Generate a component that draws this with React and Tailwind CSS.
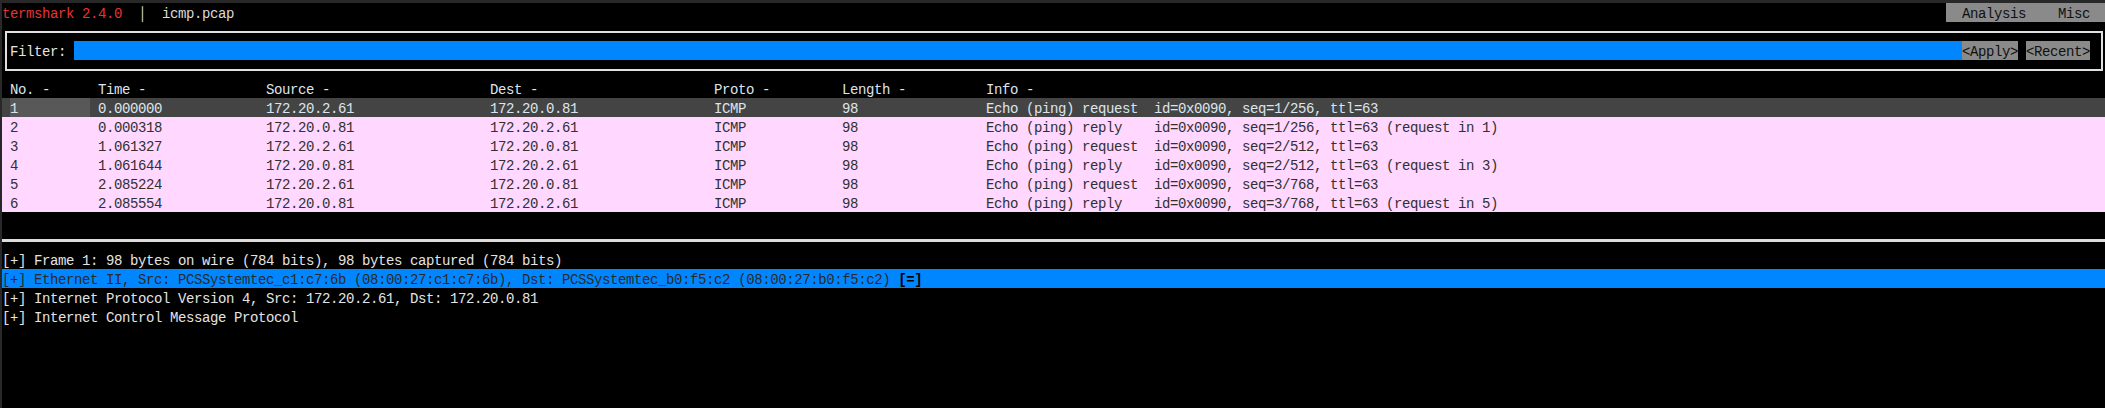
import React from 'react';

// termshark packet view: one terminal cell = 8px wide, 19px tall
const packets = [
  { no: '1', time: '0.000000', src: '172.20.2.61', dst: '172.20.0.81', info: 'Echo (ping) request  id=0x0090, seq=1/256, ttl=63' },
  { no: '2', time: '0.000318', src: '172.20.0.81', dst: '172.20.2.61', info: 'Echo (ping) reply    id=0x0090, seq=1/256, ttl=63 (request in 1)' },
  { no: '3', time: '1.061327', src: '172.20.2.61', dst: '172.20.0.81', info: 'Echo (ping) request  id=0x0090, seq=2/512, ttl=63' },
  { no: '4', time: '1.061644', src: '172.20.0.81', dst: '172.20.2.61', info: 'Echo (ping) reply    id=0x0090, seq=2/512, ttl=63 (request in 3)' },
  { no: '5', time: '2.085224', src: '172.20.2.61', dst: '172.20.0.81', info: 'Echo (ping) request  id=0x0090, seq=3/768, ttl=63' },
  { no: '6', time: '2.085554', src: '172.20.0.81', dst: '172.20.2.61', info: 'Echo (ping) reply    id=0x0090, seq=3/768, ttl=63 (request in 5)' },
];

function Cols({ no, time, src, dst, proto, len, info, cursor }) {
  return (
    <>
      <div className="w-[8px] shrink-0" />
      <div className="w-[88px] shrink-0">
        <div className={cursor ? 'w-[80px] h-[19px] bg-[#585858]' : 'w-[80px] h-[19px]'}>{no}</div>
      </div>
      <div className="w-[168px] shrink-0">{time}</div>
      <div className="w-[224px] shrink-0">{src}</div>
      <div className="w-[224px] shrink-0">{dst}</div>
      <div className="w-[128px] shrink-0">{proto}</div>
      <div className="w-[144px] shrink-0">{len}</div>
      <div className="flex-1">{info}</div>
    </>
  );
}

export default function App() {
  return (
    <div className="w-[2105px] h-[408px] overflow-hidden bg-[#282828] pt-[3px] pl-[2px] font-['Liberation_Mono','DejaVu_Sans_Mono',monospace] text-[14px] tracking-[-0.4px] whitespace-pre">
      <div className="h-full bg-black text-[#e4e4e4]">
        {/* title + menu */}
        <div className="flex h-[19px] leading-[23px]">
          <div className="w-[1944px] shrink-0">
            <span className="text-[#e63434]">termshark 2.4.0</span>
            <span className="text-[#dcdcdc]">  │  icmp.pcap</span>
          </div>
          <div className="w-[160px] shrink-0 h-[19px] bg-[#8a8a8a] text-[#101010]">  Analysis    Misc  </div>
        </div>

        {/* filter box */}
        <div className="h-[57px] pt-[8.5px] pl-[3px] pr-[2px]">
          <div className="h-[40px] border-2 border-[#e0e0e0] py-[8.5px] pl-[3px]">
            <div className="flex h-[19px] leading-[23px]">
              <div className="w-[64px] shrink-0">Filter: </div>
              <div className="w-[1888px] shrink-0 bg-[#0087ff]" />
              <div className="w-[56px] shrink-0 bg-[#8a8a8a] text-[#101010]">&lt;Apply&gt;</div>
              <div className="w-[8px] shrink-0" />
              <div className="w-[64px] shrink-0 bg-[#8a8a8a] text-[#101010]">&lt;Recent&gt;</div>
            </div>
          </div>
        </div>

        {/* packet list */}
        <div className="flex h-[19px] leading-[23px] text-[#dde5ec]">
          <Cols no="No. -" time="Time -" src="Source -" dst="Dest -" proto="Proto -" len="Length -" info="Info -" />
        </div>
        {packets.map((p, i) => (
          <div
            key={p.no}
            className={i === 0
              ? 'flex h-[19px] leading-[23px] bg-[#444444] text-[#dde5ec]'
              : 'flex h-[19px] leading-[23px] bg-[#ffd7ff] text-[#303030]'}
          >
            <Cols {...p} proto="ICMP" len="98" cursor={i === 0} />
          </div>
        ))}

        <div className="h-[19px]" />
        <div className="h-[19px] flex items-center">
          <div className="w-full h-[3px] bg-[#dcdcdc]" />
        </div>

        {/* packet details */}
        <div className="h-[19px] leading-[23px]">[+] Frame 1: 98 bytes on wire (784 bits), 98 bytes captured (784 bits)</div>
        <div className="h-[19px] leading-[23px] bg-[#0087ff] text-[#2a2a2a]">
          [+] Ethernet II, Src: PCSSystemtec_c1:c7:6b (08:00:27:c1:c7:6b), Dst: PCSSystemtec_b0:f5:c2 (08:00:27:b0:f5:c2) <span className="font-bold text-black">[=]</span>
        </div>
        <div className="h-[19px] leading-[23px]">[+] Internet Protocol Version 4, Src: 172.20.2.61, Dst: 172.20.0.81</div>
        <div className="h-[19px] leading-[23px]">[+] Internet Control Message Protocol</div>
      </div>
    </div>
  );
}
